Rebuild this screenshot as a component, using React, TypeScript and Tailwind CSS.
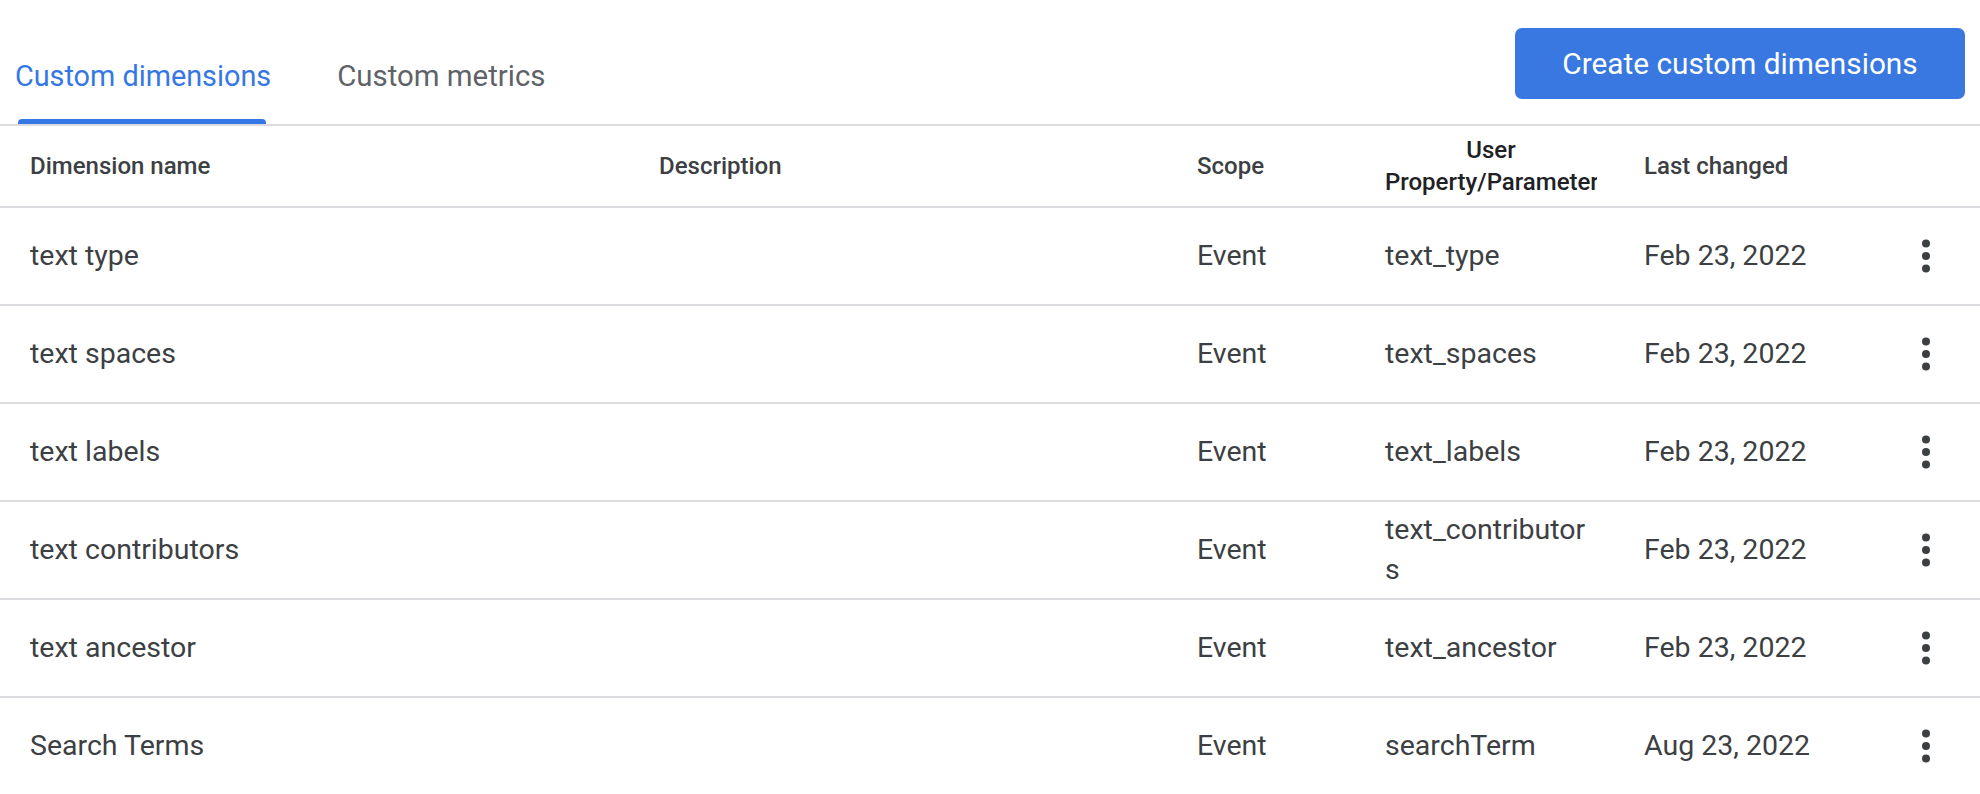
import React from "react";

const rows = [
  { name: "text type", scope: "Event", param: "text_type", date: "Feb 23, 2022" },
  { name: "text spaces", scope: "Event", param: "text_spaces", date: "Feb 23, 2022" },
  { name: "text labels", scope: "Event", param: "text_labels", date: "Feb 23, 2022" },
  { name: "text contributors", scope: "Event", param: "text_contributors", date: "Feb 23, 2022" },
  { name: "text ancestor", scope: "Event", param: "text_ancestor", date: "Feb 23, 2022" },
  { name: "Search Terms", scope: "Event", param: "searchTerm", date: "Aug 23, 2022" },
];

function Kebab() {
  return (
    <svg width="12" height="36" viewBox="0 0 12 36" aria-hidden="true">
      <circle cx="6" cy="5.5" r="4" fill="#3c4043" />
      <circle cx="6" cy="18" r="4" fill="#3c4043" />
      <circle cx="6" cy="30.5" r="4" fill="#3c4043" />
    </svg>
  );
}

const grid =
  "grid grid-cols-[629px_538px_188px_259px_240px_84px] pl-[30px] items-center";

export default function App() {
  return (
    <div
      className="w-[1980px] h-[794px] overflow-hidden bg-white"
      style={{ fontFamily: "Roboto, 'Noto Sans', Arial, sans-serif" }}
    >
      <div className="flex justify-between h-[126px] border-b-2 border-[#dadce0] pl-[15px] pr-[15px]">
        <div className="flex gap-[66px] h-full">
          <div className="relative h-full pt-[56px] text-[28.8px] leading-[40px] text-[#3578e5]">
            Custom dimensions
            <div className="absolute bottom-0 left-[3px] right-[5px] h-[5px] rounded-t-[4px] bg-[#3578e5]" />
          </div>
          <div className="relative h-full pt-[56px] text-[29.4px] leading-[40px] text-[#5f6368]">
            Custom metrics
          </div>
        </div>
        <button className="mt-[28px] h-[71px] w-[450px] rounded-[7px] bg-[#3878e0] text-white text-[29.8px] leading-[40px]">
          Create custom dimensions
        </button>
      </div>

      <div className={`${grid} h-[82px] border-b-2 border-[#dadce0] text-[24px] font-medium text-[#3c4043]`}>
        <div>Dimension name</div>
        <div>Description</div>
        <div>Scope</div>
        <div className="w-[212px] overflow-hidden text-center leading-[32px] whitespace-nowrap text-[#202124]">
          <div>User</div>
          <div>Property/Parameter</div>
        </div>
        <div>Last changed</div>
        <div />
      </div>

      {rows.map((r) => (
        <div
          key={r.name}
          className={`${grid} h-[98px] border-b-2 border-[#dadce0] text-[28.5px] leading-[40px] text-[#3c4043]`}
        >
          <div>{r.name}</div>
          <div />
          <div>{r.scope}</div>
          <div className="w-[208px] break-all">{r.param}</div>
          <div>{r.date}</div>
          <div className="flex justify-center">
            <Kebab />
          </div>
        </div>
      ))}
    </div>
  );
}
